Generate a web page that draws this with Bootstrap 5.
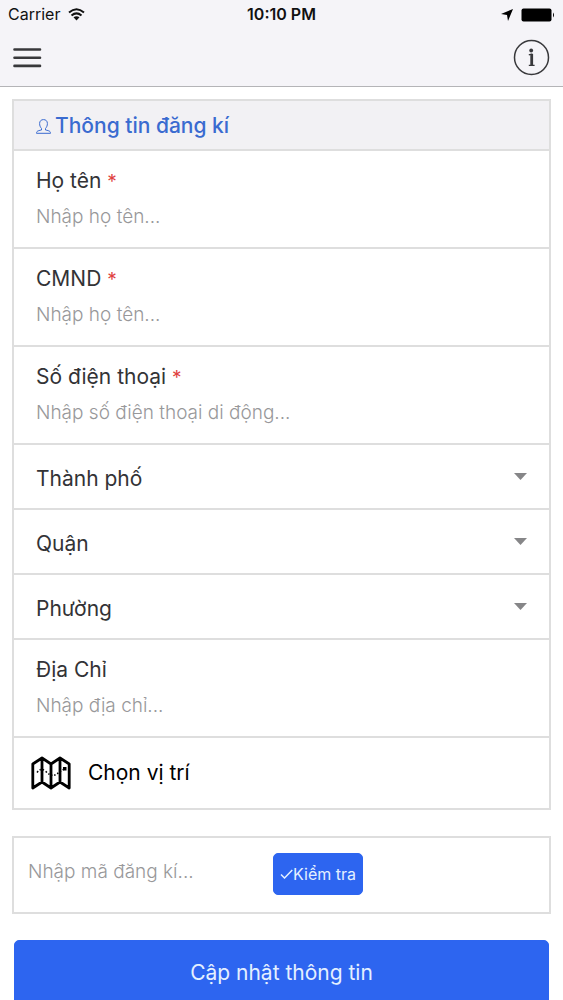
<!DOCTYPE html>
<html lang="vi">
<head>
<meta charset="utf-8">
<meta name="viewport" content="width=device-width, initial-scale=1">
<title>Thông tin đăng kí</title>
<link href="https://cdn.jsdelivr.net/npm/bootstrap@5.3.0/dist/css/bootstrap.min.css" rel="stylesheet">
<style>
  :root { --line: #dedede; --brand: #2d65f0; --hint: #98989a; }
  body { font-family: Inter, "Noto Sans", sans-serif; color: #333336; background: #fff; }
  .app-top { background: #f5f4f8; border-bottom: 1px solid #b4b4b7; color: #111; }
  .status-bar { height: 29px; padding: 0 8px; font-size: 16px; line-height: 29px; }
  .status-time { font-weight: 600; }
  .tool-bar { height: 57px; padding: 0 13px; }
  .icon-btn { border: 0; background: none; padding: 0; color: #38383b; display: flex; }
  .scroll-area { scrollbar-width: none; padding: 12px; }
  .scroll-area::-webkit-scrollbar { display: none; }
  .form-box { border: 2px solid var(--line); }
  .form-box > * + * { border-top: 2px solid var(--line); }
  .box-title { background: #f2f1f4; color: #3a6bd0; font-size: 21px; line-height: 24px; font-weight: 500; padding: 13px 22px 11px; }
  .field-row { padding: 15px 22px 13px; }
  .field-row label, .pick-row { font-size: 21px; line-height: 30px; }
  .field-row label { display: block; margin-bottom: 2px; }
  .req { color: #e0413f; font-size: 19px; line-height: 24px; }
  .bare-input { display: block; width: 100%; border: 0; padding: 0; background: none; font-size: 19px; font-weight: 300; line-height: 24px; height: 36px; color: inherit; }
  .bare-input::placeholder { color: var(--hint); opacity: 1; }
  .pick-select { display: block; width: 100%; height: 63px; padding: 4px 22px 0; border: 0; border-radius: 0; appearance: none; color: inherit; font-size: 21px; line-height: 30px;
    background: #fff url("data:image/svg+xml,%3Csvg xmlns='http://www.w3.org/2000/svg' viewBox='0 0 13 7'%3E%3Cpath d='M0 0h13L6.500 7z' fill='%23868688'/%3E%3C/svg%3E") no-repeat right 22px center / 13px 7px; }
  .pick-row { width: 100%; border: 0; background: #fff; color: #000; height: 70px; padding: 0 17px; gap: 17px; }
  .code-box { border: 2px solid var(--line); margin-top: 26px; padding: 15px 14px 17px; }
  .code-box .bare-input { width: 231px; margin-right: 14px; }
  .main-btn, .check-btn { --bs-btn-color: #e4f0ff; --bs-btn-bg: var(--brand); --bs-btn-border-color: var(--brand); --bs-btn-border-radius: 5px; }
  .check-btn { --bs-btn-font-size: 16px; --bs-btn-padding-x: 6px; --bs-btn-padding-y: 0; height: 42px; line-height: 24px; }
  .main-btn { --bs-btn-font-size: 21px; height: 66px; margin: 26px 2px 0; }
</style>
</head>
<body>
<div class="vh-100 d-flex flex-column">
  <header class="app-top flex-shrink-0">
    <div class="status-bar d-flex justify-content-between position-relative">
      <span class="d-flex align-items-center gap-2">Carrier
        <svg width="17" height="13" viewBox="0 0 17 13" fill="none" stroke="currentColor" stroke-width="2" aria-hidden="true"><path d="M1 4.500Q8.500-2 16 4.500M3.500 7.500Q8.500 3.200 13.500 7.500"/><path d="M5.500 9.300Q8.500 7 11.500 9.300L8.500 12.500z" fill="currentColor" stroke="none"/></svg>
      </span>
      <span class="status-time position-absolute start-50 translate-middle-x">10:10 PM</span>
      <span class="d-flex align-items-center gap-2">
        <svg width="12" height="12" viewBox="0 0 12 12" aria-hidden="true"><path d="M12 0 7 12 6 6 0 5z"/></svg>
        <svg width="34" height="14" viewBox="0 0 34 14" aria-hidden="true"><rect x=".5" y=".5" width="30" height="13" rx="2"/><path d="M32 4.500q2 2.500 0 5z"/></svg>
      </span>
    </div>
    <div class="tool-bar d-flex justify-content-between align-items-center">
      <button class="icon-btn" type="button" aria-label="Menu">
        <svg width="29" height="20" viewBox="0 0 29 20" stroke="currentColor" stroke-width="2.600" stroke-linecap="round"><path d="M1.500 1.500h25.500M1.500 9.700h25.500M1.500 17.900h25.500"/></svg>
      </button>
      <button class="icon-btn" type="button" aria-label="Info">
        <svg width="37" height="37" viewBox="0 0 37 37" fill="none" stroke="currentColor"><circle cx="18.500" cy="18.500" r="17" stroke-width="1.500"/><circle cx="18.200" cy="11.500" r="1.900" fill="currentColor" stroke="none"/><path d="M15.800 15.800 18.700 15v11.300M15.800 26.300h5.800" stroke-width="1.300"/><path d="M18.700 15v11.500" stroke-width="2.800"/></svg>
      </button>
    </div>
  </header>

  <main class="scroll-area flex-grow-1 overflow-auto">
    <form>
      <div class="form-box">
        <h1 class="box-title d-flex align-items-center mb-0">
          <svg class="me-1" width="15" height="15" viewBox="0 0 15 15" fill="none" stroke="currentColor" stroke-width="1" aria-hidden="true"><path d="M.5 14.300h14c0-2-1-2.500-5-3.300V9.500c1.200-1.300 1.900-3 1.900-5C11.400 2 9.800.6 7.500.6S3.600 2 3.600 4.500c0 2 .7 3.700 1.900 5V11c-4 .8-5 1.300-5 3.300z"/></svg>
          Thông tin đăng kí
        </h1>
        <div class="field-row">
          <label for="name">Họ tên <span class="req">*</span></label>
          <input class="bare-input" id="name" type="text" placeholder="Nhập họ tên...">
        </div>
        <div class="field-row">
          <label for="idno">CMND <span class="req">*</span></label>
          <input class="bare-input" id="idno" type="text" placeholder="Nhập họ tên...">
        </div>
        <div class="field-row">
          <label for="phone">Số điện thoại <span class="req">*</span></label>
          <input class="bare-input" id="phone" type="tel" placeholder="Nhập số điện thoại di động...">
        </div>
        <div><select class="pick-select" aria-label="Thành phố"><option>Thành phố</option></select></div>
        <div><select class="pick-select" aria-label="Quận"><option>Quận</option></select></div>
        <div><select class="pick-select" aria-label="Phường"><option>Phường</option></select></div>
        <div class="field-row">
          <label for="addr">Địa Chỉ</label>
          <input class="bare-input" id="addr" type="text" placeholder="Nhập địa chỉ...">
        </div>
        <div>
          <button class="pick-row d-flex align-items-center" type="button">
            <svg width="40" height="34" viewBox="0 0 40 34" fill="none" stroke="currentColor" stroke-width="2.800" stroke-linejoin="round" aria-hidden="true"><path d="M1.800 8 11 2l9 6 9-6 9.200 6v24L29 26l-9 6-9-6-9.200 6zM11 2v24M20 8v24M29 2v24"/><path d="M6 16.500q4-5 7.500-2t6 4.500q4 1 7-1.500t6-4" stroke-width="1.500" stroke-dasharray="1.500 1.800"/><path d="M32 11h3.500v3.500H32z" fill="currentColor" stroke="none"/></svg>
            Chọn vị trí
          </button>
        </div>
      </div>

      <div class="code-box d-flex align-items-start">
        <input class="bare-input" type="text" aria-label="Mã đăng kí" placeholder="Nhập mã đăng kí...">
        <button class="btn check-btn d-flex align-items-center" type="button">
          <svg width="13" height="10" viewBox="0 0 13 10" fill="none" stroke="currentColor" stroke-width="1.500" aria-hidden="true"><path d="M1 5.500 4.500 9 12.300 1"/></svg>Kiểm tra
        </button>
      </div>

      <div class="d-grid">
        <button class="btn main-btn" type="submit">Cập nhật thông tin</button>
      </div>
    </form>
  </main>
</div>
<script src="https://cdn.jsdelivr.net/npm/bootstrap@5.3.0/dist/js/bootstrap.bundle.min.js"></script>
</body>
</html>
